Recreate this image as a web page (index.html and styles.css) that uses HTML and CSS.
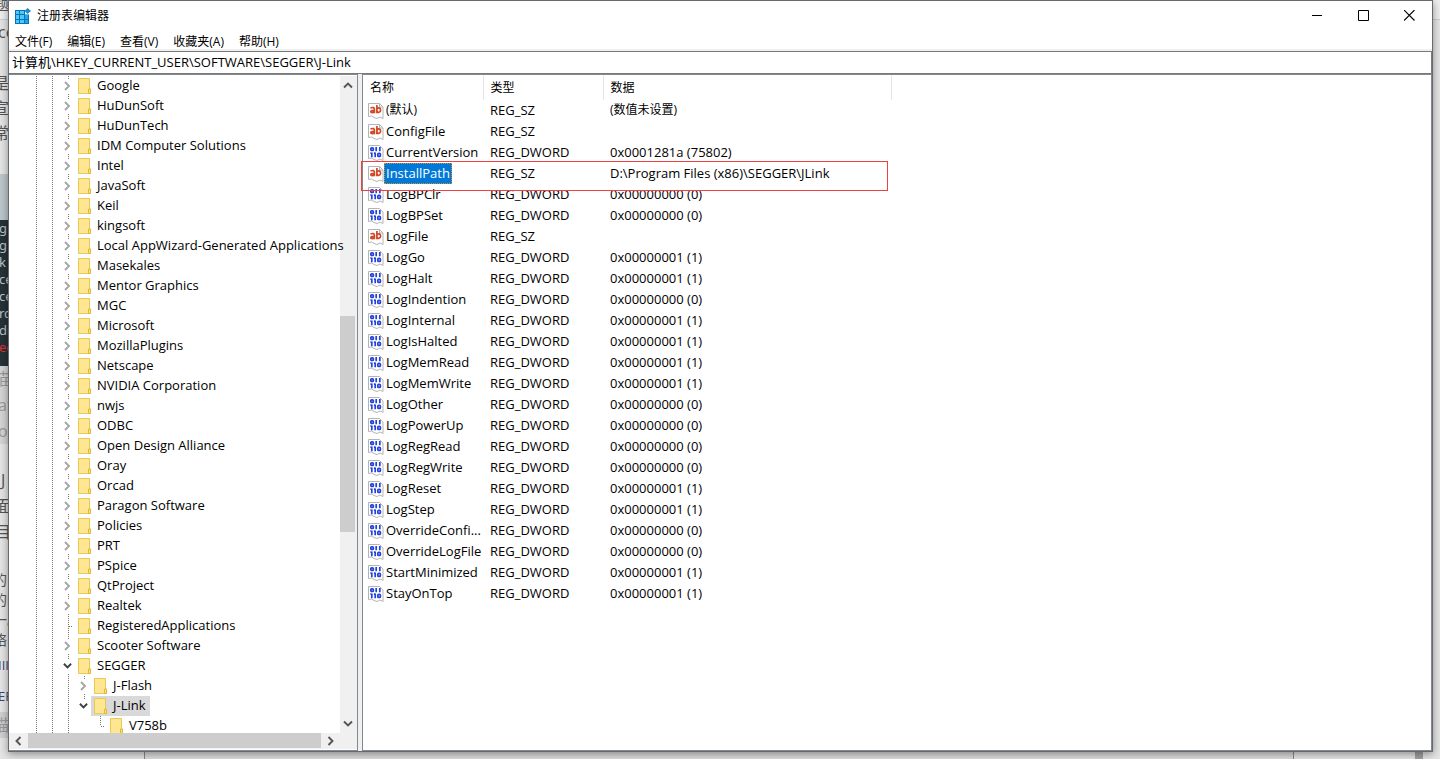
FILE: index.html
```html
<!DOCTYPE html>
<html lang="zh-CN">
<head>
<meta charset="utf-8">
<title>注册表编辑器</title>
<link rel="stylesheet" href="styles.css">
</head>
<body>
<svg class="defs" aria-hidden="true">
  <symbol id="folder" viewBox="0 0 13 16"><path d="M0.5 0.5h11v10.5h1v4.500h-12z" fill="#ffe693" stroke="#ebc850"/><path d="M10.500 15.500v-4.500h2v4.500z" fill="#ffdf74" stroke="#e3b93c"/></symbol>
  <symbol id="closed" viewBox="0 0 7 10"><path d="M1 1l4 4-4 4" fill="none" stroke="#a6a6a6" stroke-width="1.900"/></symbol>
  <symbol id="open" viewBox="0 0 10 7"><path d="M1 1l4 4 4-4" fill="none" stroke="#404040" stroke-width="2.100"/></symbol>
  <symbol id="str" viewBox="0 0 16 16"><path d="M0.500 0.500h11l3.500 3.500v11.500l-3-1.500-3 1.500-3-1-2.500-1.500-3 .5z" fill="#fff" stroke="#b4b4b4"/><path d="M11.500 .5v3.500h3.500" fill="none" stroke="#b4b4b4"/><g fill="none" stroke="#d24726" stroke-width="1.700"><path d="M2.500 5c2.500-1.100 3.900-.3 3.900 1.300v4M6.400 7.300c-2.300 0-3.600.2-3.600 1.400s2.300 1.300 3.600 0"/><path d="M8.900 2v8.300M8.900 6c1-1.600 3.700-1.600 3.700 1.100s-2.700 2.700-3.700 1.100"/></g></symbol>
  <symbol id="bin" viewBox="0 0 16 16"><path d="M0.500 0.500h11l3.500 3.500v11.500l-3-1.500-3 1.500-3-1-2.500-1.500-3 .5z" fill="#fff" stroke="#b4b4b4"/><g fill="none" stroke="#2442d8" stroke-width="1.700"><rect x="2.800" y="2.800" width="2.600" height="2.600" rx="1"/><path d="M8.200 2v4.200M11.800 2v4.200M3.800 7.500v4.700M7.200 7.500v4.700M2.400 8.200h1M5.900 8.200h1"/><rect x="9.800" y="8.300" width="2.600" height="3.100" rx="1"/></g></symbol>
</svg>
<div class="backdrop" aria-hidden="true">
  <div class="page-edge">
    <span class="b b1">题</span><span class="b b2">ce</span>
    <span class="b b3">是</span><span class="b b4">宣</span><span class="b b5">常</span>
    <div class="shot"></div>
    <div class="code"><span>g</span><span>g</span><span>k</span><span>ce</span><span>ce</span><span>rd</span><span>din</span><span class="err">ed</span></div>
    <div class="pale"><span>苗</span><span>at</span><span>o</span></div>
    <div class="big"><span>J</span><span>面</span><span>目</span></div>
    <div class="side"><span>的</span><span>的时</span><span>一。</span><span>络</span></div>
    <div class="tags"><span>III</span><span>EF</span></div>
    <div class="last">描</div>
  </div>
  <div class="below"><i></i></div>
</div>
<main class="window">
  <header class="titlebar">
    <svg class="logo" viewBox="0 0 16 16"><rect y="2" width="14" height="14" fill="#0873b8"/><g fill="#4cc9f7"><path d="M1 3h3v3H1zM5 3h4v3H5zM1 7h3v4H1zM5 7h4v4H5zM1 12h3v3H1zM5 12h4v3H5z"/><path d="M10 7h3v4h-3zM10 12h3v3h-3z" fill="#20a8e2"/></g><path d="M10 1h6v5.500h-6z" fill="#fff"/><path d="M12.500 0L16 3l-3.500 3L9.500 3z" fill="#198fc9"/></svg>
    <h1>注册表编辑器</h1>
    <div class="controls">
      <button aria-label="最小化"><svg viewBox="0 0 11 11"><path d="M0 5.500h10" stroke="#000"/></svg></button>
      <button aria-label="最大化"><svg viewBox="0 0 11 11"><path d="M.5 .5h10v10h-10z" fill="none" stroke="#000"/></svg></button>
      <button aria-label="关闭"><svg viewBox="0 0 11 11"><path d="M0 0l10.500 10.500M10.500 0L0 10.500" stroke="#000" stroke-width="1.100"/></svg></button>
    </div>
  </header>
  <nav class="menu">
    <button>文件(F)</button><button>编辑(E)</button><button>查看(V)</button><button>收藏夹(A)</button><button>帮助(H)</button>
  </nav>
  <input class="address" aria-label="地址" value="计算机\HKEY_CURRENT_USER\SOFTWARE\SEGGER\J-Link">
  <div class="panes">
    <section class="tree-pane">
      <div class="tree-view">
        <ul class="tree">
          <li><svg class="chev"><use href="#closed"/></svg><svg class="folder"><use href="#folder"/></svg><span>Google</span></li>
          <li><svg class="chev"><use href="#closed"/></svg><svg class="folder"><use href="#folder"/></svg><span>HuDunSoft</span></li>
          <li><svg class="chev"><use href="#closed"/></svg><svg class="folder"><use href="#folder"/></svg><span>HuDunTech</span></li>
          <li><svg class="chev"><use href="#closed"/></svg><svg class="folder"><use href="#folder"/></svg><span>IDM Computer Solutions</span></li>
          <li><svg class="chev"><use href="#closed"/></svg><svg class="folder"><use href="#folder"/></svg><span>Intel</span></li>
          <li><svg class="chev"><use href="#closed"/></svg><svg class="folder"><use href="#folder"/></svg><span>JavaSoft</span></li>
          <li><svg class="chev"><use href="#closed"/></svg><svg class="folder"><use href="#folder"/></svg><span>Keil</span></li>
          <li><svg class="chev"><use href="#closed"/></svg><svg class="folder"><use href="#folder"/></svg><span>kingsoft</span></li>
          <li><svg class="chev"><use href="#closed"/></svg><svg class="folder"><use href="#folder"/></svg><span>Local AppWizard-Generated Applications</span></li>
          <li><svg class="chev"><use href="#closed"/></svg><svg class="folder"><use href="#folder"/></svg><span>Masekales</span></li>
          <li><svg class="chev"><use href="#closed"/></svg><svg class="folder"><use href="#folder"/></svg><span>Mentor Graphics</span></li>
          <li><svg class="chev"><use href="#closed"/></svg><svg class="folder"><use href="#folder"/></svg><span>MGC</span></li>
          <li><svg class="chev"><use href="#closed"/></svg><svg class="folder"><use href="#folder"/></svg><span>Microsoft</span></li>
          <li><svg class="chev"><use href="#closed"/></svg><svg class="folder"><use href="#folder"/></svg><span>MozillaPlugins</span></li>
          <li><svg class="chev"><use href="#closed"/></svg><svg class="folder"><use href="#folder"/></svg><span>Netscape</span></li>
          <li><svg class="chev"><use href="#closed"/></svg><svg class="folder"><use href="#folder"/></svg><span>NVIDIA Corporation</span></li>
          <li><svg class="chev"><use href="#closed"/></svg><svg class="folder"><use href="#folder"/></svg><span>nwjs</span></li>
          <li><svg class="chev"><use href="#closed"/></svg><svg class="folder"><use href="#folder"/></svg><span>ODBC</span></li>
          <li><svg class="chev"><use href="#closed"/></svg><svg class="folder"><use href="#folder"/></svg><span>Open Design Alliance</span></li>
          <li><svg class="chev"><use href="#closed"/></svg><svg class="folder"><use href="#folder"/></svg><span>Oray</span></li>
          <li><svg class="chev"><use href="#closed"/></svg><svg class="folder"><use href="#folder"/></svg><span>Orcad</span></li>
          <li><svg class="chev"><use href="#closed"/></svg><svg class="folder"><use href="#folder"/></svg><span>Paragon Software</span></li>
          <li><svg class="chev"><use href="#closed"/></svg><svg class="folder"><use href="#folder"/></svg><span>Policies</span></li>
          <li><svg class="chev"><use href="#closed"/></svg><svg class="folder"><use href="#folder"/></svg><span>PRT</span></li>
          <li><svg class="chev"><use href="#closed"/></svg><svg class="folder"><use href="#folder"/></svg><span>PSpice</span></li>
          <li><svg class="chev"><use href="#closed"/></svg><svg class="folder"><use href="#folder"/></svg><span>QtProject</span></li>
          <li><svg class="chev"><use href="#closed"/></svg><svg class="folder"><use href="#folder"/></svg><span>Realtek</span></li>
          <li><i class="leaf"></i><svg class="folder"><use href="#folder"/></svg><span>RegisteredApplications</span></li>
          <li><svg class="chev"><use href="#closed"/></svg><svg class="folder"><use href="#folder"/></svg><span>Scooter Software</span></li>
          <li><svg class="chev"><use href="#open"/></svg><svg class="folder"><use href="#folder"/></svg><span>SEGGER</span></li>
          <li class="child"><svg class="chev"><use href="#closed"/></svg><svg class="folder"><use href="#folder"/></svg><span>J-Flash</span></li>
          <li class="child current"><svg class="chev"><use href="#open"/></svg><b class="mark"><svg class="folder"><use href="#folder"/></svg><span>J-Link</span></b></li>
          <li class="grandchild"><i class="leaf"></i><svg class="folder"><use href="#folder"/></svg><span>V758b</span></li>
        </ul>
      </div>
      <div class="vbar">
        <svg viewBox="0 0 10 7"><path d="M1 5.500l4-4 4 4" fill="none" stroke="#555" stroke-width="1.900"/></svg>
        <i class="vgap-top"></i><i class="vthumb"></i><i class="vgap-bottom"></i>
        <svg viewBox="0 0 10 7"><path d="M1 1.500l4 4 4-4" fill="none" stroke="#555" stroke-width="1.900"/></svg>
      </div>
      <div class="hbar">
        <svg viewBox="0 0 7 10"><path d="M5.500 1l-4 4 4 4" fill="none" stroke="#555" stroke-width="1.900"/></svg>
        <i class="hthumb"></i>
        <svg viewBox="0 0 7 10"><path d="M1.500 1l4 4-4 4" fill="none" stroke="#555" stroke-width="1.900"/></svg>
      </div>
    </section>
    <section class="list-pane">
      <table>
        <thead><tr><th class="c1">名称</th><th class="c2">类型</th><th class="c3">数据</th></tr></thead>
        <tbody>
          <tr class="unset"><td><svg><use href="#str"/></svg><span>(默认)</span></td><td>REG_SZ</td><td class="cjk">(数值未设置)</td></tr>
          <tr><td><svg><use href="#str"/></svg><span>ConfigFile</span></td><td>REG_SZ</td><td></td></tr>
          <tr><td><svg><use href="#bin"/></svg><span>CurrentVersion</span></td><td>REG_DWORD</td><td>0x0001281a (75802)</td></tr>
          <tr class="selected"><td><svg><use href="#str"/></svg><span>InstallPath</span></td><td>REG_SZ</td><td>D:\Program Files (x86)\SEGGER\JLink</td></tr>
          <tr><td><svg><use href="#bin"/></svg><span>LogBPClr</span></td><td>REG_DWORD</td><td>0x00000000 (0)</td></tr>
          <tr><td><svg><use href="#bin"/></svg><span>LogBPSet</span></td><td>REG_DWORD</td><td>0x00000000 (0)</td></tr>
          <tr><td><svg><use href="#str"/></svg><span>LogFile</span></td><td>REG_SZ</td><td></td></tr>
          <tr><td><svg><use href="#bin"/></svg><span>LogGo</span></td><td>REG_DWORD</td><td>0x00000001 (1)</td></tr>
          <tr><td><svg><use href="#bin"/></svg><span>LogHalt</span></td><td>REG_DWORD</td><td>0x00000001 (1)</td></tr>
          <tr><td><svg><use href="#bin"/></svg><span>LogIndention</span></td><td>REG_DWORD</td><td>0x00000000 (0)</td></tr>
          <tr><td><svg><use href="#bin"/></svg><span>LogInternal</span></td><td>REG_DWORD</td><td>0x00000001 (1)</td></tr>
          <tr><td><svg><use href="#bin"/></svg><span>LogIsHalted</span></td><td>REG_DWORD</td><td>0x00000001 (1)</td></tr>
          <tr><td><svg><use href="#bin"/></svg><span>LogMemRead</span></td><td>REG_DWORD</td><td>0x00000001 (1)</td></tr>
          <tr><td><svg><use href="#bin"/></svg><span>LogMemWrite</span></td><td>REG_DWORD</td><td>0x00000001 (1)</td></tr>
          <tr><td><svg><use href="#bin"/></svg><span>LogOther</span></td><td>REG_DWORD</td><td>0x00000000 (0)</td></tr>
          <tr><td><svg><use href="#bin"/></svg><span>LogPowerUp</span></td><td>REG_DWORD</td><td>0x00000000 (0)</td></tr>
          <tr><td><svg><use href="#bin"/></svg><span>LogRegRead</span></td><td>REG_DWORD</td><td>0x00000000 (0)</td></tr>
          <tr><td><svg><use href="#bin"/></svg><span>LogRegWrite</span></td><td>REG_DWORD</td><td>0x00000000 (0)</td></tr>
          <tr><td><svg><use href="#bin"/></svg><span>LogReset</span></td><td>REG_DWORD</td><td>0x00000001 (1)</td></tr>
          <tr><td><svg><use href="#bin"/></svg><span>LogStep</span></td><td>REG_DWORD</td><td>0x00000001 (1)</td></tr>
          <tr><td><svg><use href="#bin"/></svg><span>OverrideConfi...</span></td><td>REG_DWORD</td><td>0x00000000 (0)</td></tr>
          <tr><td><svg><use href="#bin"/></svg><span>OverrideLogFile</span></td><td>REG_DWORD</td><td>0x00000000 (0)</td></tr>
          <tr><td><svg><use href="#bin"/></svg><span>StartMinimized</span></td><td>REG_DWORD</td><td>0x00000001 (1)</td></tr>
          <tr><td><svg><use href="#bin"/></svg><span>StayOnTop</span></td><td>REG_DWORD</td><td>0x00000001 (1)</td></tr>
        </tbody>
      </table>
      <div class="callout"></div>
    </section>
  </div>
</main>
</body>
</html>
```
FILE: styles.css
```css
* { box-sizing: border-box; }
html, body { height: 100%; }
body { margin: 0; overflow: hidden; background: #e6e6e6; color: #000; font: 13px/20px "Open Sans", "Noto Sans CJK SC", sans-serif; }
button, input { font: inherit; color: inherit; }
.defs { position: absolute; width: 0; height: 0; }

.backdrop { position: absolute; inset: 0; overflow: hidden; background: linear-gradient(#eee 0 19px, #ccc 19px 20px, #e4e4e4 20px); }
.page-edge { width: 8px; overflow: hidden; white-space: nowrap; color: #555; font-size: 16px; text-indent: -7px; }
.page-edge span { display: block; }
.b { height: 25px; line-height: 25px; }
.b1 { height: 20px; line-height: 8px; }
.b2 { text-indent: -2px; }
.b3 { margin-top: 26px; }
.shot { height: 46px; margin-top: 28px; background: #bcc6ca; }
.code { height: 146px; background: #263238; color: #b9c4c8; font: 13px/17px "Noto Sans", sans-serif; text-indent: -1px; }
.code .err { color: #d33; }
.pale { height: 78px; background: #d4d4d4; color: #999; line-height: 26px; text-indent: -2px; }
.big { margin-top: 23px; line-height: 26px; text-indent: -5px; }
.big span:first-child { text-indent: 1px; }
.side { margin-top: 25px; font-size: 14px; line-height: 20px; }
.tags { font-size: 13px; line-height: 31px; color: #446; text-indent: -2px; }
.last { color: #999; background: #d0d0d0; line-height: 26px; }
.below { position: absolute; left: 144px; right: 146px; bottom: 0; height: 8px; background: #dcdcdc; border: solid #888; border-width: 0 1px; }
.below i { position: absolute; right: -130px; width: 8px; height: 8px; background: #a0a0a0; }

.window { position: relative; display: flex; flex-direction: column; height: calc(100% - 7px); margin: 0 7px 0 8px; border: 1px solid #666a6e; background: #fff; box-shadow: 0 2px 8px #0006; }
.titlebar { display: flex; align-items: center; height: 29px; padding-left: 6px; }
.logo { width: 16px; height: 16px; }
h1 { flex: 1; margin: 0 0 0 6px; font-size: 12px; font-weight: 400; }
.controls { display: flex; }
.controls button { display: flex; align-items: center; justify-content: center; width: 46px; height: 29px; border: 0; padding: 0; background: none; }
.controls svg { width: 11px; height: 11px; }
.menu { display: flex; gap: 15px; height: 21px; padding-left: 6px; border-bottom: 2px solid #f0f0f0; }
.menu button { padding: 2px 0 0; border: 0; background: none; font-size: 12px; line-height: 20px; }
.address { height: 23px; width: 100%; border: 1px solid #7a7a7a; border-left: 0; padding: 0 2px 2px 3px; background: #fff; outline: 0; }

.panes { flex: 1; display: flex; gap: 4px; min-height: 0; background: #f0f0f0; }
.tree-pane { display: grid; grid-template: minmax(0, 1fr) 16px / minmax(0, 1fr) 17px; width: 349px; padding: 1px 0 1px 0; border: 1px solid #828790; border-left: 0; background: #fff; }
.tree-view { z-index: 1; overflow-x: visible; overflow-y: clip; }
.tree { margin: 0; padding: 0; list-style: none; background: repeating-linear-gradient(#777 0 1px, #fff 1px 2px) 27px 0 / 1px 100% no-repeat, repeating-linear-gradient(#777 0 1px, #fff 1px 2px) 43px 0 / 1px 100% no-repeat, repeating-linear-gradient(#777 0 1px, #fff 1px 2px) 59px 0 / 1px 100% no-repeat; }
.tree li { display: flex; align-items: center; height: 20px; padding-left: 53px; white-space: nowrap; }
.tree span { padding-bottom: 2px; }
.chev { flex: none; width: 11px; height: 14px; padding: 2px 1px; background: #fff; }
.leaf { flex: none; width: 11px; height: 1px; border-left: 7px solid #fff0; background: repeating-linear-gradient(90deg, #777 0 1px, #fff 1px 2px); background-clip: padding-box; }
.folder { flex: none; width: 13px; height: 16px; margin: 0 6px 0 5px; }
.tree .child { padding-left: 69px; background: repeating-linear-gradient(#777 0 1px, #fff 1px 2px) 75px 0 / 1px 100% no-repeat; }
.tree .current { background-size: 1px 8px; }
.tree .grandchild { padding-left: 85px; background: repeating-linear-gradient(#777 0 1px, #fff 1px 2px) 91px 0 / 1px 10px no-repeat; }
.mark { display: flex; align-items: center; height: 20px; margin-left: 2px; padding-right: 4px; background: #d9d9d9; font-weight: 400; }
.mark .folder { margin-left: 3px; }
.vbar { display: flex; flex-direction: column; align-items: center; background: #f0f0f0; padding: 6px 2px 6px 0; }
.vbar svg { width: 10px; height: 7px; }
.vgap-top { flex: 227; }
.vthumb { flex: 216; width: 15px; background: #cdcdcd; }
.vgap-bottom { flex: 188; }
.hbar { grid-column: 1 / 3; display: flex; align-items: center; padding: 0 23px 1px 6px; background: #f0f0f0; }
.hbar svg { width: 7px; height: 10px; }
.hthumb { flex: 1; height: 15px; margin: 0 6px; background: #cdcdcd; }

.list-pane { position: relative; flex: 1; border: 1px solid #828790; background: #fff; }
table { border-collapse: collapse; table-layout: fixed; width: 529px; }
th, td { height: 21px; padding: 0 0 1px 7px; line-height: 20px; text-align: left; white-space: nowrap; font-weight: 400; }
th { height: 25px; padding-bottom: 0; border-right: 1px solid #e5e5e5; font-size: 12px; }
.c1, .c2 { width: 120px; }
td:first-child { display: flex; align-items: center; padding: 0 0 0 5px; }
td:first-child span { height: 21px; padding: 0 2px; line-height: 20px; }
td svg { flex: none; width: 16px; height: 16px; }
td.cjk, .unset span { font-size: 12px; }
.selected td:first-child span { background: #0078d7; color: #fff; outline: 1px dotted #e58a2b; outline-offset: -1px; }
.callout { position: absolute; left: -2px; top: 86px; width: 527px; height: 30px; border: 1px solid #f04040; }
```
